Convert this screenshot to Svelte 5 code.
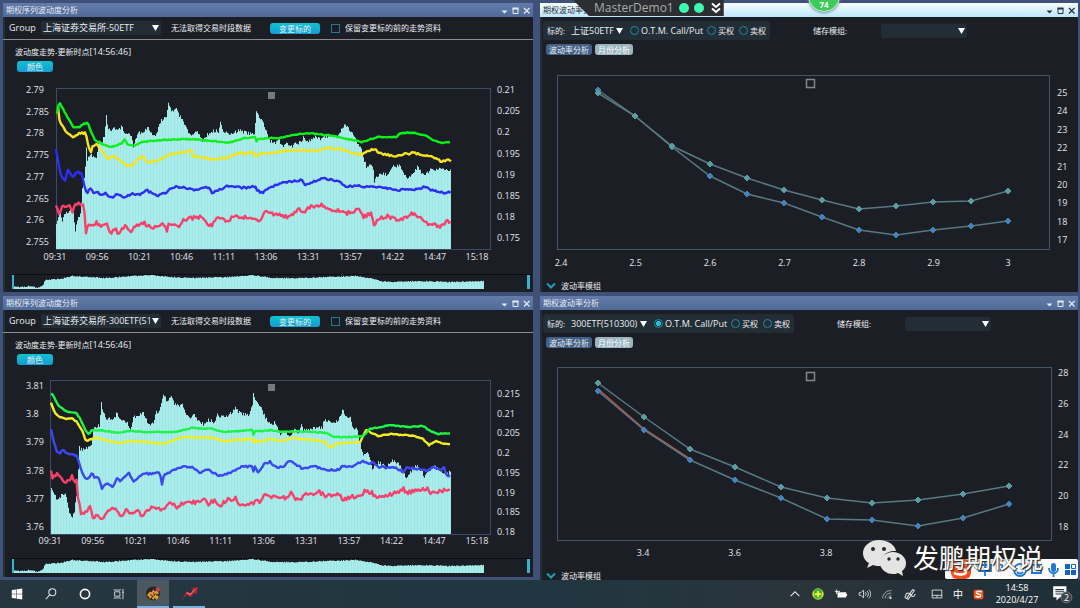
<script>
    // keypoints are "x,y" pairs, the lines between get a little tick noise
    const trends = [
        {
            group: '上海证券交易所-50ETF',
            view: '3 75 530 217',
            frame: { x: 56, y: 89, w: 434, h: 160 },
            left: { x: 26, start: 90, step: 21.7, labels: ['2.79', '2.785', '2.78', '2.775', '2.77', '2.765', '2.76', '2.755'] },
            right: { x: 497, start: 90, step: 21.2, labels: ['0.21', '0.205', '0.2', '0.195', '0.19', '0.185', '0.18', '0.175'] },
            times: { x: 55, y: 257, step: 42.2 },
            nav: 274,
            area: '56,226 60,211 62,221 65,212 70,210 73,212 75,233 77,219 80,215 82,190 84,180 86,149 87,160 90,154 93,157 96,160 98,143 102,142 104,135 106,117 108,130 115,129 122,127 125,133 131,135 133,146 137,134 142,132 147,127 151,134 157,134 159,123 162,120 166,117 168,102 170,109 173,112 176,110 180,117 184,123 188,133 193,135 197,131 202,140 207,135 213,131 218,131 220,123 223,130 228,135 233,134 238,130 245,132 252,134 254,133 256,113 259,118 263,122 267,134 270,141 275,144 278,139 283,147 286,142 292,147 295,142 301,143 303,135 306,143 310,141 315,136 320,139 325,136 337,135 341,130 345,124 348,129 352,131 355,139 360,147 363,157 366,167 370,165 373,170 374,183 376,176 382,173 388,175 391,167 400,166 403,173 407,177 413,173 417,167 421,173 427,173 430,169 447,170 451,172',
            lines: [
                { color: '#f6416c', noise: 4, pts: '56,207 59,214 62,205 67,208 69,204 72,212 77,203 84,206 86,235 88,222 92,225 97,222 100,227 107,223 110,233 115,228 118,234 125,227 131,232 136,225 143,223 155,228 163,223 167,230 169,222 178,227 183,220 200,217 211,226 218,216 227,221 233,217 255,218 258,222 265,213 270,212 277,215 288,217 295,213 300,209 305,213 308,207 320,205 333,210 347,213 358,209 363,217 371,213 374,227 378,219 388,216 398,221 404,219 412,213 418,217 428,224 440,226 447,222 451,222' },
                { color: '#2d2df5', noise: 2, pts: '56,150 58,160 61,177 65,181 68,170 73,177 77,172 82,174 84,185 87,193 90,187 93,193 97,191 100,194 106,193 111,198 117,194 124,197 133,194 140,194 146,190 157,196 167,192 172,187 183,187 192,190 208,187 212,193 227,186 247,188 255,186 257,190 262,193 270,188 278,184 302,180 305,185 322,178 338,181 347,187 357,185 365,187 383,187 393,190 413,190 425,187 432,190 445,193 451,192' },
                { color: '#f4e41f', noise: 2, pts: '58,108 60,123 63,126 67,133 73,138 80,133 86,133 88,145 91,153 93,145 98,145 102,151 107,158 115,157 120,160 123,163 131,167 138,159 143,156 147,162 160,160 170,154 192,151 193,158 197,156 210,159 227,158 237,153 255,153 256,157 258,154 270,153 290,150 317,151 327,148 342,149 352,154 362,154 374,149 382,154 393,156 413,153 433,157 442,162 447,160 451,161' },
                { color: '#0df01a', noise: 1, pts: '57,114 59,102 63,109 68,118 73,127 80,127 83,124 88,123 91,132 95,140 100,143 107,146 112,147 122,143 125,139 128,145 133,146 142,142 160,140 193,139 213,141 228,143 245,138 255,137 256,144 257,139 270,138 280,138 293,135 308,133 333,136 348,139 362,142 377,137 397,137 400,133 413,133 425,135 433,140 442,143 451,142' }
            ]
        },
        {
            group: '上海证券交易所-300ETF(51',
            view: '3 368 530 209',
            frame: { x: 50, y: 381, w: 440, h: 153 },
            left: { x: 26, start: 386, step: 28.2, labels: ['3.81', '3.8', '3.79', '3.78', '3.77', '3.76'] },
            right: { x: 497, start: 394, step: 19.7, labels: ['0.215', '0.21', '0.205', '0.2', '0.195', '0.19', '0.185', '0.18'] },
            times: { x: 50, y: 541, step: 42.7 },
            nav: 558,
            area: '51,490 55,497 58,500 62,492 66,496 69,513 71,518 74,512 76,496 78,470 79,448 82,450 86,448 91,447 93,430 99,425 101,404 103,413 107,420 113,418 117,413 121,420 127,422 130,430 133,418 142,412 147,422 153,425 155,413 159,412 162,398 163,394 167,402 171,398 175,405 182,405 185,412 190,420 193,413 197,419 203,425 208,420 215,422 217,412 220,417 227,417 235,408 240,413 248,415 252,407 253,395 256,402 260,405 263,413 268,423 272,425 275,422 280,435 283,430 289,437 293,430 298,432 301,426 303,431 313,428 322,427 324,420 337,422 342,411 346,415 350,418 353,428 357,430 360,445 363,455 368,454 372,468 378,462 387,467 391,461 398,463 403,470 406,478 410,472 417,465 422,472 424,477 428,470 435,467 442,473 448,474 451,470',
            lines: [
                { color: '#f6416c', noise: 4, pts: '51,472 53,478 57,472 60,478 67,482 72,477 77,482 78,498 81,513 86,512 90,506 93,518 97,513 101,520 107,513 115,507 120,516 126,511 133,513 137,511 143,516 149,508 163,509 170,502 178,508 183,503 200,502 204,498 208,504 215,500 220,505 227,500 235,498 240,504 252,503 260,501 265,495 270,496 277,497 285,498 292,492 296,500 302,499 306,492 313,496 320,492 325,496 340,495 343,500 352,496 358,498 365,491 372,493 378,497 397,493 403,488 405,493 427,488 430,493 442,491 448,489 451,492' },
                { color: '#3c46f2', noise: 2, pts: '51,430 53,438 57,452 60,453 63,450 67,453 77,456 80,465 83,475 88,480 92,472 94,477 99,478 102,488 107,483 112,487 117,479 121,481 129,473 134,482 143,474 160,473 162,484 164,475 180,467 193,467 199,473 207,469 218,476 230,473 243,466 252,467 253,472 255,467 258,472 265,463 270,462 275,467 283,467 290,460 297,465 303,469 312,466 330,470 340,470 342,466 352,467 363,461 370,464 374,462 377,467 397,468 404,473 407,467 427,471 433,467 442,470 444,468 448,478 451,473' },
                { color: '#f0ee22', noise: 1, pts: '51,403 55,413 59,417 67,419 72,418 77,422 82,430 86,441 92,439 100,438 107,441 122,443 130,441 147,442 163,444 183,437 213,438 223,441 252,439 253,446 254,440 260,442 270,439 283,441 292,438 320,441 325,442 330,448 338,443 360,442 366,430 378,436 390,434 415,436 423,439 429,445 437,441 443,444 451,444' },
                { color: '#1cf545', noise: 1, pts: '51,394 53,395 58,405 63,409 68,412 76,413 80,418 85,430 89,434 92,430 107,431 120,433 128,431 153,432 175,432 192,428 213,429 223,432 252,430 253,438 254,431 265,431 270,430 280,432 292,431 313,432 328,433 333,437 350,437 363,436 370,429 390,425 407,427 423,426 432,432 438,434 451,433' }
            ]
        }
    ];

    const smiles = [
        {
            symbol: '上证50ETF', selectWidth: 56, otm: false, active: true,
            view: '540 58 538 222',
            frame: { x: 557, y: 76, w: 492, h: 173 },
            yAxis: { x: 1057, start: 92, step: 18.4, labels: ['25', '24', '23', '22', '21', '20', '19', '18', '17'] },
            xAxis: { y: 263, start: 561, step: 74.5, labels: ['2.4', '2.5', '2.6', '2.7', '2.8', '2.9', '3'] },
            legend: 79,
            lines: [
                { color: '#4682b8', pts: '598,90 635,116 672,147 710,176 747,194 784,203 822,217 859,230 896,235 933,230 971,226 1008,221' },
                { color: '#5a9c9f', pts: '598,93 635,116 672,146 710,164 747,178 784,190 822,200 859,209 896,206 933,202 971,201 1008,191' }
            ]
        },
        {
            symbol: '300ETF(510300)', selectWidth: 80, otm: true, active: false,
            view: '540 351 538 219',
            frame: { x: 557, y: 368, w: 494, h: 172 },
            yAxis: { x: 1058, start: 372, step: 30.8, labels: ['28', '26', '24', '22', '20', '18'] },
            xAxis: { y: 553, start: 643, step: 91.6, labels: ['3.4', '3.6', '3.8'] },
            legend: 372,
            lines: [
                { color: '#c0504d', bare: true, pts: '598,389 644,429 690,459' },
                { color: '#4682b8', pts: '598,391 644,430 690,460 735,480 781,498 827,519 872,520 918,526 963,518 1009,504' },
                { color: '#5a9c9f', pts: '598,383 644,417 690,449 735,467 781,487 827,498 872,503 918,500 963,494 1009,486' }
            ]
        }
    ];

    const times = ['09:31', '09:56', '10:21', '10:46', '11:11', '13:06', '13:31', '13:57', '14:22', '14:47', '15:18'];
    const navShape = '14,13 20,13 30,12 37,14 42,12 45,6 60,5 72,2 90,3 105,4 120,3 150,1 170,3 190,4 230,3 252,1 265,3 270,4 300,4 355,2 370,4 380,7 392,8 420,7 450,8 484,7';

    function parse(str) {
        return str.split(' ').map((p) => p.split(',').map(Number));
    }

    function at(pts, x) {
        let i = 1;
        while (i < pts.length - 1 && pts[i][0] < x) i++;
        const [x0, y0] = pts[i - 1];
        const [x1, y1] = pts[i];
        return y0 + ((y1 - y0) * (x - x0)) / (x1 - x0);
    }

    function random(seed) {
        let s = seed;
        return () => {
            s = (s * 16807) % 2147483647;
            return s / 2147483647 - 0.5;
        };
    }

    function linePath(str, noise) {
        const pts = parse(str);
        const rnd = random(str.length * 31 + noise);
        const out = [];
        for (let x = pts[0][0]; x <= pts[pts.length - 1][0]; x += 1.5) {
            out.push(x + ',' + (at(pts, x) + rnd() * noise).toFixed(1));
        }
        return 'M' + out.join('L');
    }

    function areaPath(str, base, noise, dy = 0) {
        const pts = parse(str);
        const rnd = random(77);
        const end = pts[pts.length - 1][0];
        let d = `M${pts[0][0]},${base}`;
        for (let x = pts[0][0]; x < end; x += 1) {
            d += `V${(at(pts, x) + dy + rnd() * noise).toFixed(1)}H${Math.min(x + 1, end)}`;
        }
        return d + `V${base}Z`;
    }
</script>

{#snippet titlebar(text, active)}
    <header class="titlebar" class:active>
        <h2>{text}</h2>
        <button aria-label="菜单"><svg viewBox="0 0 9 9"><path d="M1.500 4.500h6l-3 3z" fill="currentColor" /></svg></button>
        <button aria-label="最大化"><svg viewBox="0 0 9 9"><path d="M2 2.500h5v5H2z" fill="none" stroke="currentColor" /><path d="M1.500 1.500h6v2h-6z" fill="currentColor" /></svg></button>
        <button aria-label="关闭"><svg viewBox="0 0 9 9"><path d="M2 2l5.500 5.500M7.500 2L2 7.500" stroke="currentColor" stroke-width="1.200" /></svg></button>
    </header>
{/snippet}

{#snippet trendPanel(t, i)}
    <section class="panel trend">
        {@render titlebar('期权序列波动度分析', false)}
        <div class="toolbar">
            <label class="group" for="group{i}">Group</label>
            <select class="wide" id="group{i}"><option>{t.group}</option></select>
            <span class="status">无法取得交易时段数据</span>
            <button class="pill">变更标的</button>
            <label class="keep"><input type="checkbox" />保留变更标的前的走势资料</label>
        </div>
        <div class="caption">
            <h3>波动度走势-更新时点<time>[14:56:46]</time></h3>
            <button class="pill small">颜色</button>
        </div>
        <svg class="chart" viewBox={t.view}>
            <defs>
                <pattern id="bars{i}" width="3" height="8" patternUnits="userSpaceOnUse">
                    <rect width="3" height="8" fill="#a8edeb" />
                    <rect width="1" height="8" fill="#a0e5e3" />
                </pattern>
            </defs>
            <rect x={t.frame.x + 0.5} y={t.frame.y - 0.5} width={t.frame.w} height={t.frame.h + 1} fill="none" stroke="#3f4c69" />
            <path d={areaPath(t.area, t.frame.y + t.frame.h, 4)} fill="url(#bars{i})" />
            {#each t.lines as l}
                <path d={linePath(l.pts, l.noise)} fill="none" stroke={l.color} stroke-width="2.400" stroke-linejoin="round" />
            {/each}
            <rect x="268" y={t.frame.y + 3} width="7" height="7" fill="#77797d" />
            {#each t.left.labels as label, n}
                <text x={t.left.x} y={t.left.start + n * t.left.step + 3}>{label}</text>
            {/each}
            {#each t.right.labels as label, n}
                <text x={t.right.x} y={t.right.start + n * t.right.step + 3}>{label}</text>
            {/each}
            {#each times as time, n}
                <text class="mid" x={t.times.x + n * t.times.step} y={t.times.y + 3}>{time}</text>
            {/each}
            <rect x="12" y={t.nav} width="519" height="1" fill="#0b0d12" />
            <path d={areaPath(navShape, t.nav + 15, 1, t.nav)} fill="url(#bars{i})" />
            <rect x="12" y={t.nav + 1} width="2" height="14" fill="#36b4cd" />
            <rect x="527" y={t.nav + 1} width="3" height="14" fill="#36b4cd" />
        </svg>
    </section>
{/snippet}

{#snippet smilePanel(s, i)}
    <section class="panel smile">
        {@render titlebar('期权波动率分析', s.active)}
        <div class="filters">
            <div class="box">
                <label for="symbol{i}">标的:</label>
                <select id="symbol{i}" style="width: {s.selectWidth}px"><option>{s.symbol}</option></select>
                <label class="radio otm"><input type="radio" name="side{i}" checked={s.otm} />O.T.M. Call/Put</label>
                <label class="radio"><input type="radio" name="side{i}" />买权</label>
                <label class="radio"><input type="radio" name="side{i}" />卖权</label>
            </div>
            <label class="store" for="store{i}">储存模组:</label>
            <select class="saved" id="store{i}"><option></option></select>
        </div>
        <div class="tabs">
            <button class="tab">波动率分析</button>
            <button class="tab light">月份分析</button>
        </div>
        <svg class="chart" viewBox={s.view}>
            <rect x={s.frame.x + 0.5} y={s.frame.y - 0.5} width={s.frame.w} height={s.frame.h + 1} fill="none" stroke="#46536f" />
            <rect x="806.5" y={s.legend + 0.5} width="8" height="8" fill="none" stroke="#85878a" stroke-width="1.500" />
            {#each s.lines as l}
                <polyline points={l.pts} fill="none" stroke={l.bare ? l.color : '#587982'} stroke-width="1.500" />
                {#if !l.bare}
                    {#each parse(l.pts) as [x, y]}
                        <path d="M{x - 3},{y}l3,-3l3,3l-3,3z" fill={l.color} stroke={l.color} stroke-linejoin="round" />
                    {/each}
                {/if}
            {/each}
            {#each s.yAxis.labels as label, n}
                <text x={s.yAxis.x} y={s.yAxis.start + n * s.yAxis.step + 4}>{label}</text>
            {/each}
            {#each s.xAxis.labels as label, n}
                <text class="mid" x={s.xAxis.start + n * s.xAxis.step} y={s.xAxis.y + 3}>{label}</text>
            {/each}
        </svg>
        <button class="expander">
            <svg viewBox="0 0 10 8"><path d="M1 1.500l4 4 4-4" fill="none" stroke="#1f9fb5" stroke-width="2" /></svg>
            波动率模组
        </button>
    </section>
{/snippet}

<div class="desktop">
    <main class="workspace">
        {@render trendPanel(trends[0], 0)}
        {@render smilePanel(smiles[0], 0)}
        {@render trendPanel(trends[1], 1)}
        {@render smilePanel(smiles[1], 1)}
    </main>

    <div class="recorder">
        <span>MasterDemo1</span>
        <i></i><i></i>
        <svg viewBox="0 0 10 12" width="10" height="12"><path d="M1 1.500l4 3.500 4-3.500M1 6.500l4 3.500 4-3.500" fill="none" stroke="#fff" stroke-width="2" /></svg>
    </div>
    <div class="score">74</div>

    <div class="ime">
        <svg viewBox="0 0 133 20">
            <rect x="6" y="0" width="20" height="20" rx="6" fill="#f4511e" />
            <path d="M22 4.500c-4-2-11-1.500-11 1.800 0 3.500 10 2.500 10 6.200 0 3.500-8 4-12 1.500" fill="none" stroke="#fff" stroke-width="2.500" />
            <g fill="none" stroke="#2079d3" stroke-width="1.800">
                <path d="M34 6h12v6H34zM40 2v15M55 6c3-2 3 4 0 6" />
                <circle cx="75" cy="11" r="6" />
                <path d="M72 9v1M78 9v1M72 13c2 2 4 2 6 0M87 6h9v8h-9zM90 3l7 7" />
                <path d="M104 9c0 7 9 7 9 0M108.500 14v4" />
            </g>
            <rect x="106" y="4" width="5" height="9" rx="2.500" fill="#2079d3" />
            <path d="M120 5h5v5h-5zM120 11h5v5h-5zM126 11h5v5h-5z" fill="#1565c0" />
            <path d="M126.500 5.500h4v4h-4z" fill="none" stroke="#1565c0" />
        </svg>
    </div>
    <div class="watermark">
        <svg viewBox="0 0 43 38" width="43" height="38">
            <path d="M16 1C7 1 0 7 0 14c0 4 2 8 6 10l-2 5 6-3c2 1 5 1 8 1C16 18 24 11 33 12 32 6 25 1 16 1z" fill="#e4e4e4" />
            <path d="M30 13c-7 0-13 5-13 11s6 11 13 11c2 0 3 0 5-1l5 3-1-5c3-2 4-5 4-8 0-6-6-11-13-11z" fill="#e4e4e4" />
            <g fill="#25282e"><circle cx="10" cy="10" r="2" /><circle cx="21" cy="10" r="2" /><circle cx="26" cy="20" r="1.700" /><circle cx="35" cy="20" r="1.700" /></g>
        </svg>
        <span>发鹏期权说</span>
    </div>

    <footer class="taskbar">
        <button aria-label="开始"><svg viewBox="0 0 16 16"><path d="M2 3.500l5-.7v4.800H2zM7.600 2.700L14 1.800v5.800H7.600zM2 8.300h5v4.900l-5-.7zM7.600 8.300H14v6l-6.400-.9z" fill="#fff" /></svg></button>
        <button aria-label="搜索"><svg viewBox="0 0 16 16"><g fill="none" stroke="#dfe3e5" stroke-width="1.200"><circle cx="9.500" cy="6" r="4" /><path d="M6.500 9L2 14" /></g></svg></button>
        <button aria-label="Cortana"><svg viewBox="0 0 16 16"><circle cx="8" cy="8" r="5.300" fill="none" stroke="#fff" stroke-width="1.800" /></svg></button>
        <button aria-label="任务视图"><svg viewBox="0 0 16 16"><g fill="none" stroke="#dfe3e5"><path d="M3 5.500h6v5H3zM2.500 2.500v1h7v-1M2.500 13.500v-1h7v1M12.500 2v12M11.500 6h2" /></g></svg></button>
        <button class="app current" aria-label="行情">
            <svg viewBox="0 0 16 16"><circle cx="7.500" cy="8" r="6.500" fill="#2c2525" /><path d="M3 8l2-2 1 1 2-3 1 2 3-1 1 3-2 1 2 2-2 3-2-2-1 2-2-2-2 1 0-2-2-1z" fill="#e0a03a" /><path d="M10 3l2-1 1 1 1-1v3l-2 2-2-2z" fill="#c8434b" /><path d="M5 9l2 1M8 7l1 3M6 12l2-2M10 8l1 2" stroke="#5a2410" /></svg>
        </button>
        <button class="app" aria-label="交易">
            <svg viewBox="0 0 18 16"><path d="M1 15l5-9 4 2 3-4-3-1 8-2-2 8-2-2-4 5-4-3z" fill="#c9253a" /><path d="M6 7l4 2 4-5" fill="none" stroke="#ff8e96" /></svg>
        </button>
        <div class="tray">
            <svg viewBox="0 0 16 16"><path d="M3 10.500l5-5 5 5" fill="none" stroke="#dfe3e5" stroke-width="1.200" /></svg>
            <svg viewBox="0 0 16 16"><circle cx="8" cy="8" r="6.500" fill="#e7e22c" /><path d="M3 4a6.500 6.500 0 0 1 10 0l-1 7a5 5 0 0 1-8 1z" fill="#3fb63b" /><path d="M8 4.500v7M4.500 8h7" stroke="#f7ef3b" stroke-width="2" /></svg>
            <svg viewBox="0 0 16 16"><path d="M4 6h10v6H4zM14 8h1v2h-1z" fill="#fff" /><path d="M1 5h6M3 3v5" stroke="#fff" /></svg>
            <svg viewBox="0 0 16 16"><g fill="none" stroke="#dfe3e5"><path d="M2.500 6.500h2l3-3v9l-3-3h-2zM9.500 6c1 1 1 3 0 4M11.500 4.500c2 2 2 5 0 7M13.500 3c3 3 3 7 0 10" /></g></svg>
            <svg viewBox="0 0 16 16"><g fill="none" stroke="#aeb7bb"><path d="M3 13C3 8 7 4 13 4M6 13c0-4 3-6 7-6M9 13c0-2 2-3 4-3" /></g><circle cx="12" cy="12.500" r="1.200" fill="#fff" /></svg>
            <svg viewBox="0 0 16 16"><g fill="none" stroke="#dfe3e5" stroke-width="1.200"><path d="M4 13l7-10 2 1-7 10zM3 9c1-3 4-3 6 0s4 2 5-1M3 13c-1-1-1-3 1-4" /></g></svg>
            <svg class="pad" viewBox="0 0 16 16"><path d="M2.500 3.500h11v9h-11zM2.500 9.500h11M8 9.500v3" fill="none" stroke="#dfe3e5" /></svg>
            <span class="lang">中</span>
            <svg viewBox="0 0 16 16"><rect x="2" y="3" width="11" height="11" rx="2" fill="#f4511e" /><path d="M11 5.500c-2-1-6-1-6 1s5 1 5 3.200-4 2-6 .8" fill="none" stroke="#fff" stroke-width="1.600" /></svg>
        </div>
        <div class="clock"><time>14:58</time><time>2020/4/27</time></div>
        <button class="notice" aria-label="通知">
            <svg viewBox="0 0 20 20"><path d="M2 3h12v10H8l-3 3v-3H2z" fill="#fff" /><path d="M4 6h8M4 8h8M4 10h6" stroke="#26343c" /><circle cx="14" cy="13" r="5" fill="#3c444a" stroke="#8b9297" stroke-width=".6" /><text x="14" y="16">2</text></svg>
        </button>
    </footer>
</div>

<style>
    :global(body) {
        background: #3f5179;
        overflow: hidden;
    }

    .desktop {
        position: relative;
        display: flex;
        flex-direction: column;
        height: 100vh;
        overflow: hidden;
        font-family: "Open Sans", "Noto Sans CJK SC", sans-serif;
        font-size: 8px;
        line-height: 12px;
        color: #eceef1;
    }

    h2, h3 {
        margin: 0;
        font-size: inherit;
        font-weight: normal;
    }

    button, select, input {
        font: inherit;
        color: inherit;
        margin: 0;
        padding: 0;
        border: 0;
        background: none;
        box-sizing: border-box;
    }

    .workspace {
        flex: 1;
        min-height: 0;
        overflow: hidden;
        display: grid;
        grid-template-columns: minmax(0, 530fr) minmax(0, 538fr);
        align-content: start;
        align-items: start;
        gap: 4px 7px;
        padding: 3px 2px 0 3px;
        background: #3f5179;
    }

    .panel {
        background: #1b1e25;
        box-shadow: inset 2px 0 #222e38;
    }

    .titlebar {
        display: flex;
        align-items: center;
        height: 14px;
        padding: 0 1px 0 3px;
        background: linear-gradient(#647ba8, #506b99);
        color: #e6ecf6;
    }

    .titlebar.active {
        background: linear-gradient(#f6fcff, #bde6fb);
        color: #26303c;
    }

    .titlebar h2 {
        flex: 1;
    }

    .titlebar button {
        width: 11px;
        height: 11px;
    }

    .titlebar svg {
        display: block;
        width: 9px;
        height: 9px;
        margin: 1px;
    }

    .toolbar {
        display: flex;
        align-items: center;
        height: 22px;
        padding-left: 6px;
        border-bottom: 1px solid #8a8a8c;
    }

    .group {
        width: 32px;
        font-size: 9px;
    }

    select {
        appearance: none;
        height: 14px;
        padding: 0 11px 0 2px;
        border-radius: 2px;
        background: #222d36 url("data:image/svg+xml,%3Csvg xmlns='http://www.w3.org/2000/svg' width='7' height='6'%3E%3Cpath d='M0 0h7L3.500 6z' fill='white'/%3E%3C/svg%3E") no-repeat right 2px center;
        font-size: 9px;
        overflow: hidden;
    }

    .wide {
        width: 120px;
    }

    .status {
        width: 99px;
        margin-left: 10px;
    }

    .pill {
        width: 50px;
        height: 11px;
        line-height: 11px;
        border-radius: 3px;
        background: linear-gradient(#10c2cf, #159bd3);
    }

    .pill.small {
        width: 36px;
    }

    .keep {
        display: flex;
        align-items: center;
        gap: 5px;
        margin-left: 11px;
    }

    input[type="checkbox"] {
        appearance: none;
        width: 9px;
        height: 9px;
        border: 1px solid #1d7c8c;
    }

    .caption {
        display: flex;
        flex-direction: column;
        align-items: flex-start;
        gap: 3px;
        padding: 6px 0 3px 12px;
    }

    .caption time {
        font-size: 9px;
    }

    .caption .pill {
        margin-left: 2px;
    }

    .chart {
        display: block;
        width: 100%;
        height: auto;
    }

    .chart text {
        font-size: 9px;
        fill: #e4e6ea;
    }

    .chart .mid {
        text-anchor: middle;
    }

    .filters {
        display: flex;
        align-items: center;
        padding: 4px 0 0 3px;
    }

    .box {
        display: flex;
        align-items: center;
        height: 19px;
        padding: 0 4px;
        border-radius: 3px;
        background: #222d36;
    }

    .box > label:first-child {
        width: 22px;
    }

    .radio {
        display: flex;
        align-items: center;
        gap: 2px;
        margin-left: 5px;
    }

    .radio.otm {
        width: 72px;
        font-size: 9px;
        white-space: nowrap;
    }

    input[type="radio"] {
        appearance: none;
        flex: none;
        width: 9px;
        height: 9px;
        border: 1px solid #1e8d9f;
        border-radius: 50%;
    }

    input[type="radio"]:checked {
        background: radial-gradient(#1fc0dc 45%, #222d36 55%);
    }

    .store {
        width: 68px;
        margin-left: 43px;
    }

    .saved {
        width: 86px;
    }

    .tabs {
        display: flex;
        gap: 3px;
        padding: 4px 0 3px 6px;
    }

    .tab {
        height: 11px;
        padding: 0 3px;
        line-height: 11px;
        border-radius: 3px;
        background: #436184;
    }

    .tab.light {
        background: #9bb4bf;
        color: #fff;
    }

    .expander {
        display: flex;
        align-items: center;
        gap: 5px;
        height: 12px;
        padding-left: 6px;
    }

    .expander svg {
        width: 10px;
        height: 8px;
    }

    .recorder {
        position: absolute;
        top: 0;
        left: 573px;
        display: flex;
        align-items: center;
        gap: 5px;
        height: 16px;
        padding: 0 3px 0 21px;
        background: #2d2e31;
        clip-path: polygon(0 0, 100% 0, 100% 100%, 16px 100%);
        font-size: 12px;
        color: #a9abae;
    }

    .recorder i {
        width: 10px;
        height: 10px;
        border-radius: 50%;
        background: #3dfaae;
    }

    .recorder svg {
        margin-left: 2px;
    }

    .score {
        position: absolute;
        top: -20px;
        left: 808px;
        display: flex;
        align-items: flex-end;
        justify-content: center;
        width: 32px;
        height: 32px;
        padding-bottom: 2px;
        box-sizing: border-box;
        border: 1px solid #c9ead2;
        border-radius: 50%;
        background: #3ecb5a;
        box-shadow: 0 1px 3px #7794a5;
        color: #fff;
        font-weight: bold;
        line-height: 9px;
    }

    .ime {
        position: absolute;
        right: 2px;
        bottom: 29px;
        width: 133px;
        height: 20px;
        border-radius: 2px;
        background: #fdfdfe;
    }

    .watermark {
        position: absolute;
        right: 37px;
        bottom: 31px;
        display: flex;
        align-items: center;
        gap: 7px;
        font-size: 26px;
        line-height: 38px;
        color: #fff;
        text-shadow: 1px 1px 1px #222, 0 0 2px #333;
    }

    .watermark svg {
        filter: drop-shadow(1px 1px 1px #222);
    }

    .taskbar {
        display: flex;
        align-items: center;
        height: 28px;
        background: linear-gradient(90deg, #26363f, #203641 50%, #2a343a 75%, #1f2f38);
    }

    .taskbar button {
        display: flex;
        align-items: center;
        justify-content: center;
        width: 34px;
        height: 28px;
    }

    .taskbar svg {
        width: 14px;
        height: 14px;
    }

    .taskbar .app {
        width: 32px;
        margin-left: 4px;
        border-bottom: 2px solid #75b2e6;
    }

    .taskbar .app svg {
        width: 17px;
        height: 17px;
    }

    .taskbar .current {
        margin-left: 1px;
        background: #4b585f;
    }

    .tray {
        display: flex;
        align-items: center;
        gap: 9px;
        margin-left: auto;
    }

    .pad {
        margin-left: 4px;
    }

    .lang {
        font-size: 10px;
        color: #fff;
    }

    .clock {
        display: flex;
        flex-direction: column;
        width: 62px;
        font-size: 9px;
        text-align: center;
        color: #fff;
    }

    .taskbar .notice {
        width: 32px;
        padding-right: 5px;
    }

    .taskbar .notice svg {
        width: 22px;
        height: 22px;
    }

    .notice text {
        font-size: 8px;
        text-anchor: middle;
        fill: #fff;
    }
</style>
